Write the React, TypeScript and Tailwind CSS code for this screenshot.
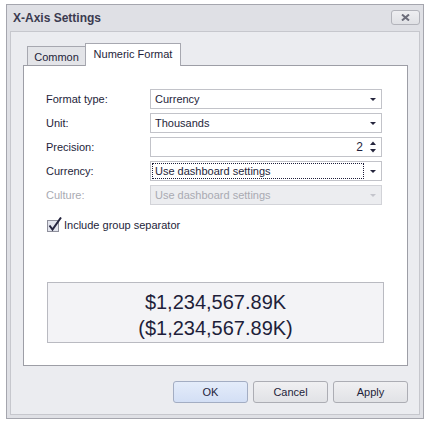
const font = { fontFamily: '"Liberation Sans", Arial, sans-serif' }

function Arrow({ disabled }: { disabled?: boolean }) {
  return (
    <svg width="8" height="5" viewBox="0 0 8 5" className="mr-[4px]">
      <path d="M1 1H7L4 4Z" fill={disabled ? '#c4c5cc' : '#25253d'} />
    </svg>
  )
}

function Combo({ value, focused, disabled }: { value: string; focused?: boolean; disabled?: boolean }) {
  return (
    <div
      className={`w-[232px] h-[20px] flex items-center border ${
        disabled ? 'bg-[#ecedf0] border-[#d2d3d8] text-[#a9aab2]' : 'bg-white border-[#c2c3c9] text-[#1e1e3a]'
      }`}
    >
      <div className="flex-1 h-full p-[1px]">
        <div
          className={`h-full flex items-center pl-[2px] w-[212px] ${
            focused ? 'border border-dotted border-[#1e1e3a]' : 'border border-transparent'
          }`}
        >
          {value}
        </div>
      </div>
      <Arrow disabled={disabled} />
    </div>
  )
}

function Row({ label, disabled, children }: { label: string; disabled?: boolean; children: React.ReactNode }) {
  return (
    <div className="flex items-center h-[20px]">
      <div className={`w-[104px] ${disabled ? 'text-[#a9aab2]' : 'text-[#1e1e3a]'}`}>{label}</div>
      {children}
    </div>
  )
}

function Btn({ label, primary }: { label: string; primary?: boolean }) {
  return (
    <div
      className={`w-[75px] h-[22px] flex items-center justify-center rounded-[3px] border text-[#1e1e3a] ${
        primary
          ? 'border-[#a3adc3] bg-gradient-to-b from-[#e4ecfa] to-[#d3dff5]'
          : 'border-[#acadb4] bg-gradient-to-b from-[#f0f0f2] to-[#e1e2e6]'
      }`}
    >
      {label}
    </div>
  )
}

export default function App() {
  return (
    <div className="w-[430px] h-[427px] bg-white pl-[6px] pt-[4px] text-[11px]" style={font}>
      <div className="w-[418px] h-[415px] border border-[#a5a6ae] bg-[#dfe0e5] px-[3px] pb-[3px] flex flex-col">
        {/* Title */}
        <div className="h-[26px] flex items-center justify-between">
          <span className="pl-[3px] text-[12px] font-bold text-[#3b3b50]">X-Axis Settings</span>
          <div className="w-[29px] h-[15px] mb-[1px] rounded-[3px] border border-[#b2b3ba] bg-gradient-to-b from-[#eeeef1] to-[#e0e1e5] flex items-center justify-center">
            <svg width="9" height="7" viewBox="0 0 9 7">
              <path d="M1 0.5L8 6.5M8 0.5L1 6.5" stroke="#6c6d7a" strokeWidth="2" />
            </svg>
          </div>
        </div>

        {/* Body */}
        <div className="flex-1 border border-[#c6c7cd] bg-[#ebecf0] pt-[11px] pl-[12px] pr-[11px] flex flex-col">
          {/* Tabs */}
          <div className="h-[23px] flex items-end pl-[4px]">
            <div className="w-[58px] h-[20px] border-l border-t border-[#a7a8b0] bg-[#e3e4e8] flex items-center justify-center pt-[1px] text-[#1e1e3a]">
              Common
            </div>
            <div className="relative z-10 w-[96px] h-[23px] border-l border-t border-r border-[#a7a8b0] bg-white flex items-center justify-center pb-[1px] text-[#1e1e3a]">
              Numeric Format
            </div>
          </div>

          {/* Panel */}
          <div className="mt-[-1px] w-[385px] h-[301px] border border-[#9d9ea6] bg-white pt-[23px] pl-[22px] flex flex-col">
            <div className="flex flex-col gap-[4px]">
              <Row label="Format type:">
                <Combo value="Currency" />
              </Row>
              <Row label="Unit:">
                <Combo value="Thousands" />
              </Row>
              <Row label="Precision:">
                <div className="w-[232px] h-[20px] flex items-center border border-[#c2c3c9] bg-white text-[#1e1e3a]">
                  <div className="flex-1 text-right pr-[6px] text-[12px]">2</div>
                  <svg width="8" height="14" viewBox="0 0 8 14" className="mr-[4px]">
                    <path d="M1 5H7L4 1.5Z" fill="#25253d" />
                    <path d="M1 9H7L4 12.5Z" fill="#25253d" />
                  </svg>
                </div>
              </Row>
              <Row label="Currency:">
                <Combo value="Use dashboard settings" focused />
              </Row>
              <Row label="Culture:" disabled>
                <Combo value="Use dashboard settings" disabled />
              </Row>
            </div>

            {/* Checkbox */}
            <div className="mt-[12px] h-[16px] flex items-center text-[#1e1e3a]">
              <svg width="16" height="16" viewBox="0 0 16 16" className="ml-[1px]">
                <rect x="0.5" y="3.5" width="11" height="11" fill="#e3e5ee" stroke="#8f909c" />
                <path d="M2.5 8.5L5.5 12.5L14 0.5" fill="none" stroke="#24243e" strokeWidth="2" />
              </svg>
              <span className="ml-[1px]">Include group separator</span>
            </div>

            {/* Preview */}
            <div className="mt-[49px] ml-[1px] w-[337px] h-[61px] border border-[#b9bac1] bg-[#f3f3f6] flex flex-col items-center justify-center pt-[5px] text-[20px] leading-[26px] text-[#1e1e3a]">
              <div>$1,234,567.89K</div>
              <div>($1,234,567.89K)</div>
            </div>
          </div>

          {/* Buttons */}
          <div className="mt-[15px] flex justify-end gap-[5px]">
            <Btn label="OK" primary />
            <Btn label="Cancel" />
            <Btn label="Apply" />
          </div>
        </div>
      </div>
    </div>
  )
}
